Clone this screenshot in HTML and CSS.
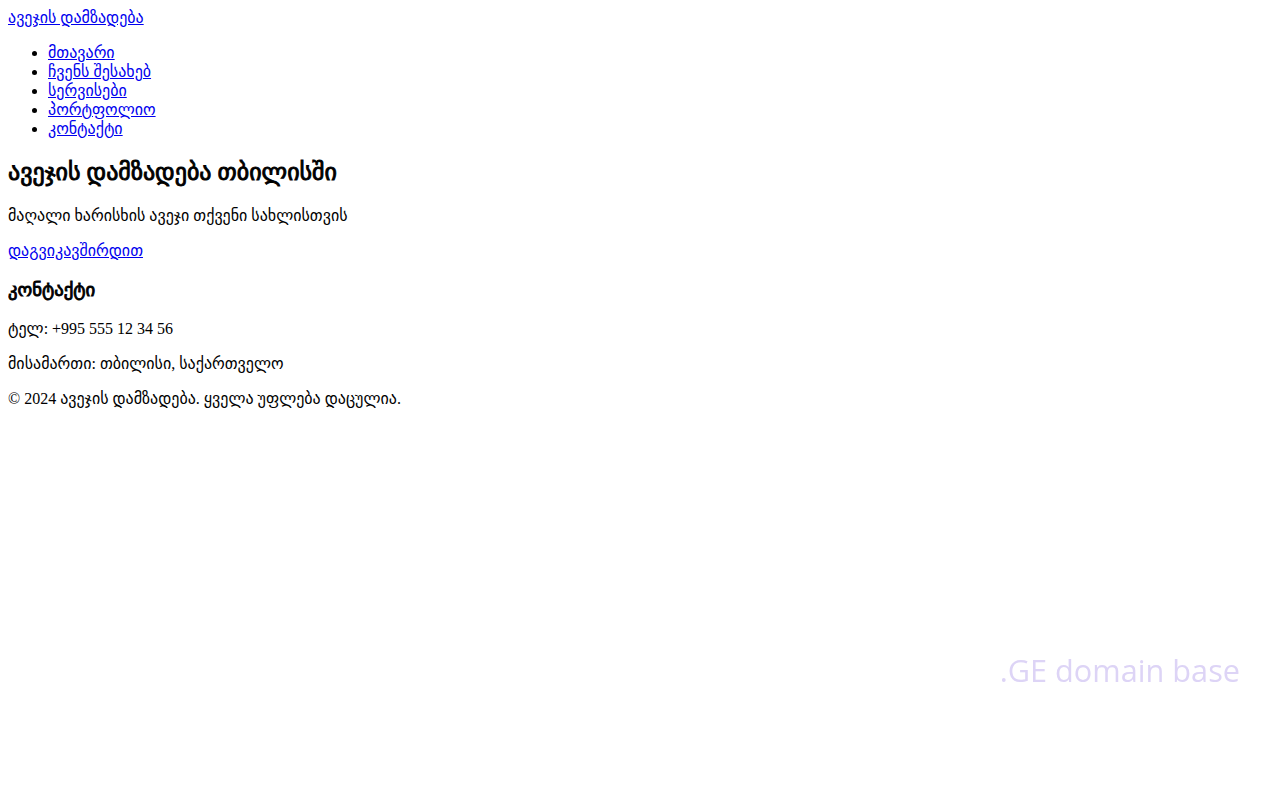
FILE: index.html
```html
<!DOCTYPE html>
<html lang="ka">
<head>
<meta charset="utf-8">
<title>ავეჯის დამზადება</title>
<link rel="stylesheet" href="styles.css">
</head>
<body>
<header class="site-header">
  <a href="#" class="logo">ავეჯის დამზადება</a>
  <nav class="main-nav">
    <ul>
      <li><a href="#">მთავარი</a></li>
      <li><a href="#">ჩვენს შესახებ</a></li>
      <li><a href="#">სერვისები</a></li>
      <li><a href="#">პორტფოლიო</a></li>
      <li><a href="#">კონტაქტი</a></li>
    </ul>
  </nav>
</header>
<section class="hero">
  <h2 class="heading">ავეჯის დამზადება თბილისში</h2>
  <p>მაღალი ხარისხის ავეჯი თქვენი სახლისთვის</p>
  <p><a href="#">დაგვიკავშირდით</a></p>
</section>
<section class="contact">
  <h3 class="heading">კონტაქტი</h3>
  <p>ტელ: +995 555 12 34 56</p>
  <p>მისამართი: თბილისი, საქართველო</p>
</section>
<footer class="site-footer">
  <p>© 2024 ავეჯის დამზადება. ყველა უფლება დაცულია.</p>
</footer>
<div class="watermark">.GE domain base</div>
</body>
</html>
```

FILE: styles.css
```css
body {
  font-family: "Liberation Serif", "DejaVu Sans", serif;
}

.heading {
  font-weight: normal;
  -webkit-text-stroke: 0.9px #000;
}

.watermark {
  position: fixed;
  right: 40px;
  bottom: 109px;
  font-family: "Open Sans", sans-serif;
  font-size: 30.7px;
  color: #ddd4f6;
  pointer-events: none;
}
```
